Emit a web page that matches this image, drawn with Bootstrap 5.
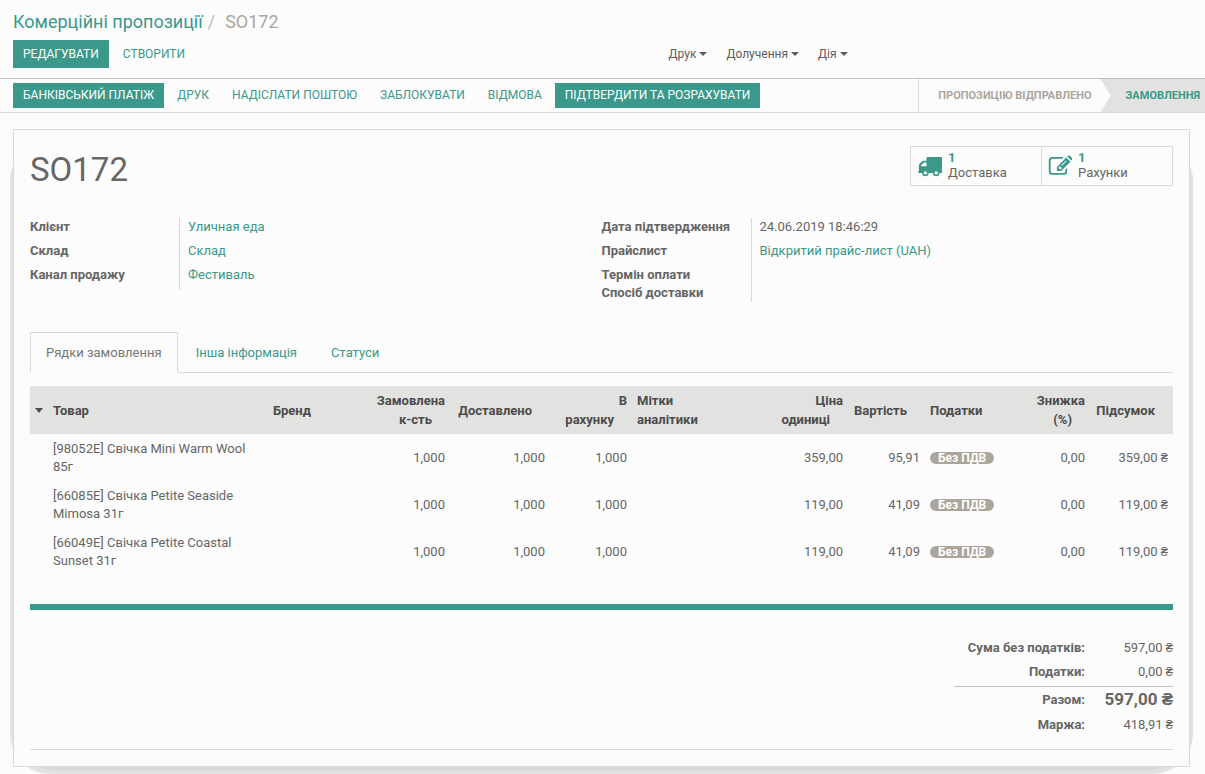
<!DOCTYPE html>
<html lang="uk">
<head>
<meta charset="utf-8">
<meta name="viewport" content="width=device-width, initial-scale=1">
<title>SO172 – Комерційні пропозиції</title>
<link href="https://cdn.jsdelivr.net/npm/bootstrap@5.3.0/dist/css/bootstrap.min.css" rel="stylesheet">
<style>
:root { --teal: #3a998a; --ink: #666; --line: #d9d9d9; --fill: #e2e2e0; --taupe: #aca59c; }
body { font: 13px/18px Roboto, "Liberation Sans", sans-serif; color: var(--ink); background: #fcfcfc; }
a { color: var(--teal); text-decoration: none; }
b, th, dt { font-weight: 700; }
.control-panel { padding: 9px 13px 10px; border-bottom: 1px solid #c0c0c0; }
.breadcrumb { font-size: 18px; line-height: 26px; margin-bottom: 5px; --bs-breadcrumb-divider-color: #bbb; --bs-breadcrumb-item-active-color: var(--taupe); --bs-breadcrumb-item-padding-x: 5px; }
.breadcrumb-item + .breadcrumb-item::before { padding-right: 10px; }
.btn { --bs-btn-border-radius: 0; --bs-btn-font-size: 12px; --bs-btn-padding-x: 9px; --bs-btn-padding-y: 0; line-height: 18px; text-transform: uppercase; }
.btn-teal { --bs-btn-color: #fff; --bs-btn-bg: var(--teal); --bs-btn-border-color: var(--teal); --bs-btn-hover-color: #fff; --bs-btn-hover-bg: #2f8073; }
.btn-plain { --bs-btn-color: var(--teal); --bs-btn-hover-color: #2f8073; }
.control-panel .btn { height: 28px; }
.control-panel .btn-menu { --bs-btn-color: #5c5c5c; --bs-btn-padding-x: 0; text-transform: none; border: 0; }
.btn-menu::after { border-width: 4px; border-bottom: 0; margin-left: 3px; vertical-align: 2px; }
.menus { gap: 19px; padding-left: 66px; }
.status-row { border-bottom: 1px solid var(--line); min-height: 34px; }
.status-row .actions { padding: 4px 0 4px 13px; gap: 3px; }
.status-row .actions .btn { height: 25px; padding-bottom: 2px; }
.stage { font-size: 11px; font-weight: 700; text-transform: uppercase; border: 0; background: none; color: var(--taupe); padding: 0 9px 0 19px; }
.stages { border-left: 1px solid var(--line); }
.stage-on { position: relative; background: var(--fill); color: var(--teal); padding: 0 5px 0 25px; }
.stage-on::before { content: ""; position: absolute; inset: 0 auto 0 0; width: 10px; background: #fcfcfc; clip-path: polygon(0 0, 100% 50%, 0 100%); }
.sheet-area { padding: 16px 15px 7px 13px; }
.sheet { position: relative; border: 1px solid var(--line); background: #fcfcfc; padding: 16px; z-index: 0; }
.sheet-shade { position: relative; isolation: isolate; }
.sheet-shade::before, .sheet-shade::after { content: ""; position: absolute; z-index: -1; background: var(--fill); inset: 11px -3px -7px; border-radius: 40px; }
.sheet-shade::after { background: var(--line); inset: 11px 4px -4px; }
h1 { font-size: 33px; line-height: 40px; font-weight: 400; margin: 4px 0 0; }
.stats { border: 1px solid var(--line); }
.stat { width: 130px; height: 38px; padding: 0 7px; gap: 6px; background: none; border: 0; text-align: left; line-height: 15px; color: var(--ink); }
.stat + .stat { width: 131px; border-left: 1px solid var(--line); padding-left: 6px; }
.stat span { padding-bottom: 2px; }
.stat svg { width: 24px; height: 24px; fill: var(--teal); }
.stat b { color: var(--teal); display: block; }
.facts { display: grid; grid-template-columns: 149px 1fr; margin: 28px 0 0; }
.facts dt, .facts dd { margin: 0; min-height: 18px; padding-bottom: 6px; }
.facts dd { border-left: 1px solid var(--line); padding-left: 8px; }
.facts .unset { padding-bottom: 0; }
.nav-tabs { margin-top: 30px; gap: 2px; --bs-nav-tabs-border-color: var(--line); --bs-nav-tabs-border-radius: 0; --bs-nav-tabs-link-active-bg: #fcfcfc; --bs-nav-tabs-link-active-border-color: var(--line) var(--line) #fcfcfc; --bs-nav-tabs-link-active-color: #777; --bs-nav-link-color: var(--teal); --bs-nav-link-hover-color: #2f8073; }
.nav-tabs .nav-link { padding: 11px 15px 10px; }
.lines { width: 100%; table-layout: fixed; margin-top: 13px; }
.lines th { background: var(--fill); color: #4c4c4c; padding: 5px; line-height: 19px; white-space: nowrap; }
.lines td { padding: 6px 5px 5px; }
.lines .num { text-align: right; }
.lines .num.sortable::after { content: ""; display: inline-block; width: 13px; }
.w-sort { width: 18px; } .w-item { width: 220px; } .w-brand { width: 97px; } .w-ord { width: 85px; } .w-dlv { width: 100px; } .w-inv { width: 82px; }
.w-tags { width: 132px; } .w-price { width: 84px; } .w-cost { width: 77px; } .w-tax { width: 95px; } .w-disc { width: 70px; } .w-sum { width: 83px; }
.caret { display: block; width: 0; border: 4px solid transparent; border-top: 5px solid #4c4c4c; border-bottom: 0; }
.tax-pill { --bs-badge-font-size: 12px; --bs-badge-padding-x: 8px; --bs-badge-padding-y: 0; --bs-badge-border-radius: 10px; --bs-badge-font-weight: 700; background: var(--taupe); line-height: 12px; }
.rule { height: 6px; background: var(--teal); margin-top: 29px; }
.totals { width: 219px; margin-top: 26px; }
.totals th { text-align: right; padding: 3px 0; }
.totals td { text-align: right; padding: 3px 0; width: 88px; }
.totals .grand > * { border-top: 1px solid #c0c0c0; padding: 4px 0; }
.totals .before-grand > * { padding-bottom: 5px; }
.totals .grand td { font-size: 17px; font-weight: 700; padding: 3px 0 5px; }
.sheet-end { border-bottom: 1px solid var(--line); height: 13px; }
</style>
</head>
<body>
<header class="control-panel">
  <nav aria-label="breadcrumb">
    <ol class="breadcrumb">
      <li class="breadcrumb-item"><a href="#">Комерційні пропозиції</a></li>
      <li class="breadcrumb-item active" aria-current="page">SO172</li>
    </ol>
  </nav>
  <div class="row g-0">
    <div class="col-6 d-flex gap-1">
      <button type="button" class="btn btn-teal">Редагувати</button>
      <button type="button" class="btn btn-plain">Створити</button>
    </div>
    <div class="col-6 d-flex menus">
      <button type="button" class="btn btn-menu dropdown-toggle">Друк</button>
      <button type="button" class="btn btn-menu dropdown-toggle">Долучення</button>
      <button type="button" class="btn btn-menu dropdown-toggle">Дія</button>
    </div>
  </div>
</header>
<div class="status-row d-flex justify-content-between">
  <div class="actions d-flex">
    <button type="button" class="btn btn-teal">Банківський платіж</button>
    <button type="button" class="btn btn-plain">Друк</button>
    <button type="button" class="btn btn-plain">Надіслати поштою</button>
    <button type="button" class="btn btn-plain">Заблокувати</button>
    <button type="button" class="btn btn-plain">Відмова</button>
    <button type="button" class="btn btn-teal">Підтвердити та розрахувати</button>
  </div>
  <div class="stages d-flex">
    <button type="button" class="stage">Пропозицію відправлено</button>
    <button type="button" class="stage stage-on">Замовлення</button>
  </div>
</div>
<main class="sheet-area">
  <div class="sheet-shade">
  <div class="sheet">
    <div class="d-flex justify-content-between align-items-start">
      <h1>SO172</h1>
      <div class="stats d-flex">
        <button type="button" class="stat d-flex align-items-center">
          <svg viewBox="0 0 24 24" aria-hidden="true"><path fill-rule="evenodd" d="M8.500 4a1 1 0 0 1 1-1H23a1 1 0 0 1 1 1V18c0 .6-.4 1-1 1h-1.500a3.300 3.300 0 0 1-6.600 0h-4.200a3.300 3.300 0 0 1-6.600 0H1a1 1 0 0 1-1-1c0-.4.3-.7.900-.7V11.500c0-.7.3-1.300.800-1.800l2.200-2.200c.5-.5 1.100-.7 1.700-.7h2.900zM6 8.600 3 11.600v.7h5.500V8.600zM7.400 17.200a1.700 1.700 0 1 0 0 3.400 1.700 1.700 0 0 0 0-3.400zm10.800 0a1.700 1.700 0 1 0 0 3.400 1.700 1.700 0 0 0 0-3.400z"/></svg>
          <span><b>1</b>Доставка</span>
        </button>
        <button type="button" class="stat d-flex align-items-center">
          <svg viewBox="0 0 24 24" aria-hidden="true"><path d="M15.500 3H4.300A3.600 3.600 0 0 0 .8 6.600v10.600a3.600 3.600 0 0 0 3.500 3.600h11.400a3.600 3.600 0 0 0 3.500-3.600v-3.500l-1.800 1.800v1.700c0 1-.8 1.800-1.700 1.800H4.300c-1 0-1.700-.8-1.700-1.800V6.600c0-1 .7-1.800 1.700-1.800h10.200z"/><path fill-rule="evenodd" d="m18.300 3.600 4.200 4.200-9.300 9.300H9v-4.200zM10.600 13.500v1.100h1.100v1h.9l1.300-1.300-2-2.100zM18 6.400l-4.900 4.900.6.600 4.900-4.900z"/><path d="m19.300 2.600.8-.8c.5-.5 1.300-.5 1.800 0l2.100 2.100c.5.5.5 1.300 0 1.800l-.8.8z"/></svg>
          <span><b>1</b>Рахунки</span>
        </button>
      </div>
    </div>
    <div class="row g-0">
      <div class="col-6">
        <dl class="facts">
          <dt>Клієнт</dt><dd><a href="#">Уличная еда</a></dd>
          <dt>Склад</dt><dd><a href="#">Склад</a></dd>
          <dt>Канал продажу</dt><dd><a href="#">Фестиваль</a></dd>
        </dl>
      </div>
      <div class="col-6">
        <dl class="facts">
          <dt>Дата підтвердження</dt><dd>24.06.2019 18:46:29</dd>
          <dt>Прайслист</dt><dd><a href="#">Відкритий прайс-лист (UAH)</a></dd>
          <dt class="unset">Термін оплати</dt><dd class="unset"></dd>
          <dt class="unset">Спосіб доставки</dt><dd class="unset"></dd>
        </dl>
      </div>
    </div>
    <ul class="nav nav-tabs">
      <li class="nav-item"><a class="nav-link active" aria-current="page" href="#">Рядки замовлення</a></li>
      <li class="nav-item"><a class="nav-link" href="#">Інша інформація</a></li>
      <li class="nav-item"><a class="nav-link" href="#">Статуси</a></li>
    </ul>
    <table class="lines">
      <colgroup><col class="w-sort"><col class="w-item"><col class="w-brand"><col class="w-ord"><col class="w-dlv"><col class="w-inv"><col class="w-tags"><col class="w-price"><col class="w-cost"><col class="w-tax"><col class="w-disc"><col class="w-sum"></colgroup>
      <thead>
        <tr>
          <th><span class="caret"></span></th><th>Товар</th><th>Бренд</th>
          <th class="num sortable">Замовлена<br>к-сть</th><th class="num sortable">Доставлено</th><th class="num sortable">В<br>рахунку</th>
          <th>Мітки<br>аналітики</th><th class="num sortable">Ціна<br>одиниці</th><th class="num sortable">Вартість</th><th>Податки</th>
          <th class="num sortable">Знижка<br>(%)</th><th class="num sortable">Підсумок</th>
        </tr>
      </thead>
      <tbody>
        <tr><td></td><td>[98052E] Свічка Mini Warm Wool 85г</td><td></td><td class="num">1,000</td><td class="num">1,000</td><td class="num">1,000</td><td></td><td class="num">359,00</td><td class="num">95,91</td><td><span class="badge tax-pill">Без ПДВ</span></td><td class="num">0,00</td><td class="num">359,00 ₴</td></tr>
        <tr><td></td><td>[66085E] Свічка Petite Seaside Mimosa 31г</td><td></td><td class="num">1,000</td><td class="num">1,000</td><td class="num">1,000</td><td></td><td class="num">119,00</td><td class="num">41,09</td><td><span class="badge tax-pill">Без ПДВ</span></td><td class="num">0,00</td><td class="num">119,00 ₴</td></tr>
        <tr><td></td><td>[66049E] Свічка Petite Coastal Sunset 31г</td><td></td><td class="num">1,000</td><td class="num">1,000</td><td class="num">1,000</td><td></td><td class="num">119,00</td><td class="num">41,09</td><td><span class="badge tax-pill">Без ПДВ</span></td><td class="num">0,00</td><td class="num">119,00 ₴</td></tr>
      </tbody>
    </table>
    <div class="rule"></div>
    <table class="totals ms-auto">
      <tbody>
        <tr><th scope="row">Сума без податків:</th><td>597,00 ₴</td></tr>
        <tr class="before-grand"><th scope="row">Податки:</th><td>0,00 ₴</td></tr>
        <tr class="grand"><th scope="row">Разом:</th><td>597,00 ₴</td></tr>
        <tr><th scope="row">Маржа:</th><td>418,91 ₴</td></tr>
      </tbody>
    </table>
    <div class="sheet-end"></div>
  </div>
  </div>
</main>
<script src="https://cdn.jsdelivr.net/npm/bootstrap@5.3.0/dist/js/bootstrap.bundle.min.js"></script>
</body>
</html>
